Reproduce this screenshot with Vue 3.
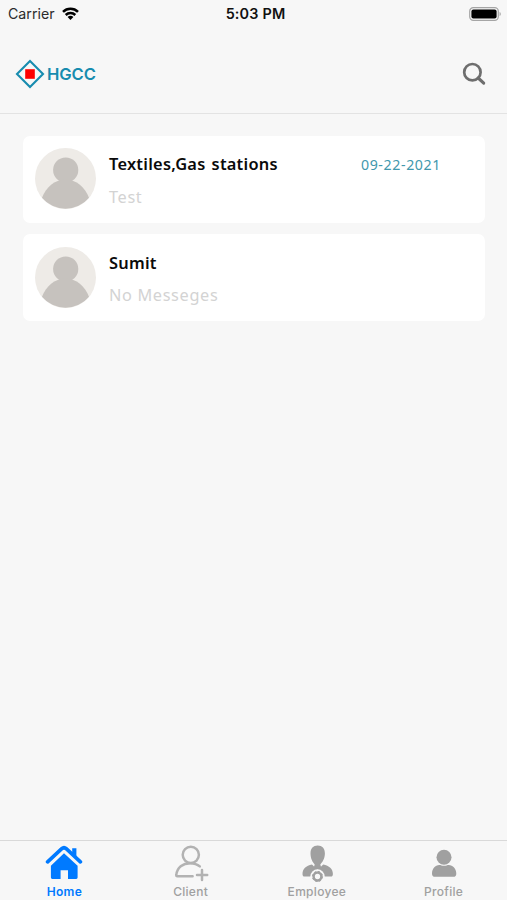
<script setup>
import { ref } from 'vue'

const chats = [
  { name: 'Textiles,Gas stations', message: 'Test', date: '09-22-2021' },
  { name: 'Sumit', message: 'No Messeges', date: '' },
]

const tabs = [
  { id: 'home', label: 'Home' },
  { id: 'client', label: 'Client' },
  { id: 'employee', label: 'Employee' },
  { id: 'profile', label: 'Profile' },
]

const active = ref('home')
</script>

<template>
  <div class="screen">
    <div class="status">
      <div class="status-left">
        <span class="carrier">Carrier</span>
        <svg class="wifi" viewBox="0 0 17 13" width="17" height="13">
          <g fill="none" stroke="#000" stroke-width="2.5">
            <path d="M1 4.9a10.6 10.6 0 0 1 15 0" />
            <path d="M3.7 8a6.8 6.8 0 0 1 9.6 0" />
          </g>
          <path d="M8.5 13 5.6 10.1a4 4 0 0 1 5.8 0z" />
        </svg>
      </div>
      <span class="time">5:03 PM</span>
      <svg class="battery" viewBox="0 0 32 14" width="32" height="14">
        <rect x=".7" y=".7" width="28.6" height="12.6" rx="3.6" fill="none" stroke="#a5a5a5" stroke-width="1.2" />
        <rect x="2.4" y="2.4" width="25.2" height="9.2" rx="2" />
        <path d="M30.6 5v4c1.5-.6 1.5-3.4 0-4z" fill="#a0a0a0" />
      </svg>
    </div>

    <header class="header">
      <div class="logo">
        <svg viewBox="0 0 30 30" width="30" height="30">
          <path d="M15 2 28 15 15 28 2 15z" fill="none" stroke="#178caf" stroke-width="2.1" />
          <rect x="10.2" y="10.2" width="9.6" height="9.6" fill="#fe0000" />
        </svg>
        <span class="logo-text">HGCC</span>
      </div>
      <svg class="search" viewBox="0 0 24 24" width="24" height="24" fill="none" stroke="#6e6e6e" stroke-width="2.7">
        <circle cx="10.4" cy="10.2" r="8.2" />
        <path d="m16.2 16 5.5 5.2" stroke-width="3.1" stroke-linecap="round" />
      </svg>
    </header>

    <main class="list">
      <div v-for="chat in chats" :key="chat.name" class="card">
        <svg class="avatar" viewBox="0 0 61 61" width="61" height="61">
          <circle cx="30.5" cy="30.5" r="30.5" fill="#eeebe7" />
          <circle cx="30.7" cy="22" r="12.6" fill="#c6c2be" />
          <path d="M7 49.7C11 39.5 19.5 31.5 30.5 31.5S50 39.5 54 49.7A30.5 30.5 0 0 1 7 49.7z" fill="#c6c2be" />
        </svg>
        <div class="card-text">
          <div class="card-name">{{ chat.name }}</div>
          <div class="card-message">{{ chat.message }}</div>
        </div>
        <span v-if="chat.date" class="card-date">{{ chat.date }}</span>
      </div>
    </main>

    <nav class="tabs">
      <div
        v-for="t in tabs"
        :key="t.id"
        class="tab"
        :class="[t.id, { active: active === t.id }]"
        @click="active = t.id"
      >
        <svg v-if="t.id === 'home'" viewBox="0 0 38 38" width="38" height="38" fill="currentColor">
          <path d="M2.6 17.8 16.8 4.7q2.2-2 4.4 0L35.4 17.8" fill="none" stroke="currentColor" stroke-width="3.7" stroke-linecap="round" stroke-linejoin="round" />
          <path d="M27.2 4.2h4.2v9.4l-4.2-4z" />
          <path d="M19 9.3 32.6 21.7V33.6q0 1.4-1.4 1.4H23v-8.7h-7.4V35H7.3q-1.4 0-1.4-1.4V21.7z" />
        </svg>
        <svg v-else-if="t.id === 'client'" viewBox="0 0 38 38" width="38" height="38" fill="none" stroke="#b2b2b2" stroke-width="2.5" stroke-linecap="round">
          <circle cx="18.8" cy="10.8" r="8.1" />
          <path d="M20.6 32.3H5.3Q4.1 32.3 4.3 31C5 23.5 10.8 19.2 18.2 19.2c4 0 7.2 1.1 9.6 3.2" />
          <path d="M30 26v10M25 31h10.2" />
        </svg>
        <svg v-else-if="t.id === 'employee'" viewBox="0 0 38 38" width="38" height="38" fill="currentColor">
          <path d="M19.7 1.6c4.5 0 7.2 2.9 7.2 8 0 5-2.6 9-4.6 10.9l1.5 5h-8.6l1.5-5c-2-1.9-4.2-5.9-4.2-10.9 0-5.1 2.7-8 7.2-8z" />
          <path d="M14 20.4 19.5 26 25.2 20.4c6 1.1 9.7 4.5 9.7 9.6 0 1.6-.7 2.6-2 2.6H6.5c-1.3 0-2-1-2-2.6 0-5.1 3.5-8.5 9.5-9.6z" />
          <circle cx="19.5" cy="32.5" r="7.2" fill="#f7f7f7" />
          <circle cx="19.5" cy="32.5" r="3.9" fill="none" stroke="currentColor" stroke-width="2.5" />
          <circle cx="19.5" cy="32.5" r="5.1" fill="none" stroke="currentColor" stroke-width="1" stroke-dasharray="2 2" />
        </svg>
        <svg v-else viewBox="0 0 38 38" width="38" height="38" fill="currentColor">
          <circle cx="19" cy="13.3" r="7.5" />
          <path d="M7 29.7c0-5.2 3.2-8.7 7.3-8.7 1.6 0 2.4.8 4.7.8s3.1-.8 4.7-.8c4.1 0 7.6 3.5 7.6 8.7 0 2-1 3.1-3 3.1H10c-2 0-3-1.1-3-3.1z" />
        </svg>
        <span class="tab-label">{{ t.label }}</span>
      </div>
    </nav>
  </div>
</template>

<style>
body { margin: 0; background: #f7f7f7; }
</style>

<style scoped>
.screen{display:flex;flex-direction:column;height:100vh;overflow:hidden;background:#f7f7f7;font-family:Inter,"Liberation Sans",sans-serif}
.status{flex:none;display:grid;grid-template-columns:1fr auto 1fr;align-items:center;height:27px;padding:0 6px 0 8px;box-sizing:border-box}
.status-left{display:flex;align-items:center;gap:7px}
.carrier{font-size:14.2px;line-height:20px;color:#2b2b2b}
.wifi{margin-bottom:1px}
.time{margin-left:2px;font-size:14.4px;line-height:20px;font-weight:600;letter-spacing:.18px;color:#111}
.battery{justify-self:end}
.header{flex:none;display:flex;justify-content:space-between;align-items:center;height:87px;padding:0 21px 0 15px;border-bottom:1px solid #e3e3e3;box-sizing:border-box}
.logo{display:flex;align-items:center;gap:1px;margin-top:8px}
.logo-text{margin-left:1px;font-size:16.6px;line-height:22px;font-weight:600;letter-spacing:-.1px;color:#178caf}
.search{margin-top:8px}
.list{flex:1;display:flex;flex-direction:column;gap:11px;padding:22px 22px 0 23px}
.card{display:flex;align-items:flex-start;height:87px;padding:12px 44px 0 12px;border-radius:7px;background:#fff;box-sizing:border-box}
.card + .card{padding-top:13px}
.avatar{flex:none}
.card-text{flex:1;margin-left:13px;font-family:"Noto Sans",sans-serif}
.card-name{margin-top:4px;font-size:16.4px;line-height:24px;font-weight:600;letter-spacing:.25px;word-spacing:1.5px;color:#0a0a0a;white-space:nowrap}
.card-message{margin-top:9px;font-size:16.3px;line-height:24px;letter-spacing:.65px;color:#d3d3d3}
.card + .card .card-message{margin-top:8px}
.card-date{margin-top:6px;font-family:"Noto Sans",sans-serif;font-size:14.2px;line-height:22px;letter-spacing:.6px;color:#4298ad}
.tabs{flex:none;display:grid;grid-template-columns:repeat(4,1fr);height:60px;border-top:1px solid #d9d9d9;box-sizing:border-box}
.tab{display:flex;flex-direction:column;align-items:center;padding-top:3px;color:#a0a0a0;cursor:pointer}
.tab.home{padding-left:2px}
.tab.client{padding-left:1px}
.tab svg{flex:none}
.tab.active{color:#007aff}
.tab-label{margin-top:2px;font-size:12px;line-height:15px;font-weight:500;letter-spacing:.3px}
.active .tab-label{font-weight:600}
</style>
